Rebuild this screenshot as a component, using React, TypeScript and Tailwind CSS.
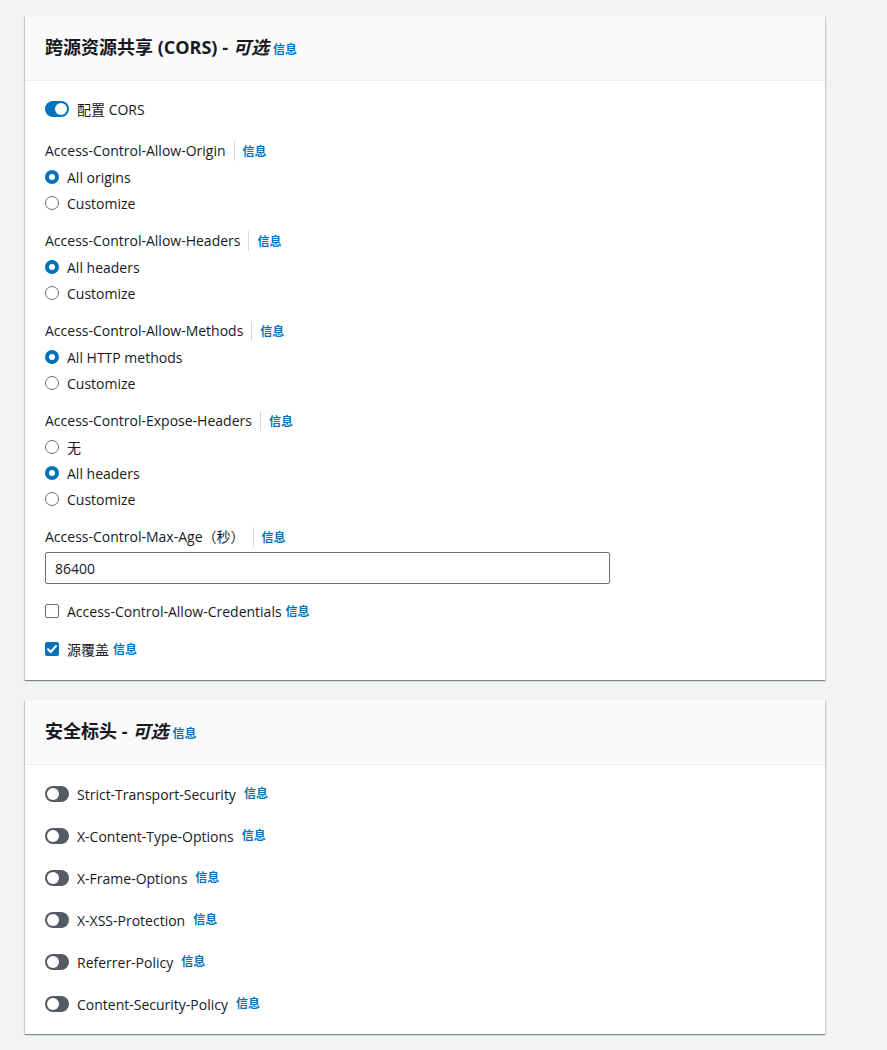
import React from "react";

const font = { fontFamily: '"Open Sans", "Noto Sans CJK SC", sans-serif' };

function Info() {
  return <a className="text-[12px] font-bold text-[#0073bb] leading-5 cursor-pointer">信息</a>;
}

function Toggle({ on }: { on?: boolean }) {
  return (
    <span
      className={`flex h-4 w-6 shrink-0 items-center rounded-full px-[2px] ${
        on ? "justify-end bg-[#0073bb]" : "justify-start bg-[#545b64]"
      }`}
    >
      <span className="h-3 w-3 rounded-full bg-white" />
    </span>
  );
}

function Radio({ checked, label }: { checked?: boolean; label: string }) {
  return (
    <label className="flex h-5 items-center gap-2">
      <span
        className={`h-[14px] w-[14px] rounded-full ${
          checked ? "border-[4px] border-[#0073bb] bg-white" : "border-[1.5px] border-[#687078] bg-white"
        }`}
      />
      <span>{label}</span>
    </label>
  );
}

function Checkbox({ checked }: { checked?: boolean }) {
  return checked ? (
    <span className="flex h-[14px] w-[14px] items-center justify-center rounded-[2px] bg-[#0073bb]">
      <svg viewBox="0 0 14 14" className="h-[14px] w-[14px]">
        <path d="M3 7.2 L5.8 10 L11 4" fill="none" stroke="white" strokeWidth="2" strokeLinecap="round" strokeLinejoin="round" />
      </svg>
    </span>
  ) : (
    <span className="h-[14px] w-[14px] rounded-[2px] border-[1.5px] border-[#687078] bg-white" />
  );
}

function FieldLabel({ children }: { children: React.ReactNode }) {
  return (
    <div className="flex h-5 items-center">
      <span className="border-r border-[#d5dbdb] pr-2 leading-5">{children}</span>
      <span className="pl-2">
        <Info />
      </span>
    </div>
  );
}

function RadioGroup({ label, options, selected }: { label: string; options: string[]; selected: number }) {
  return (
    <div className="flex flex-col gap-[6px]">
      <FieldLabel>{label}</FieldLabel>
      {options.map((o, i) => (
        <Radio key={o} label={o} checked={i === selected} />
      ))}
    </div>
  );
}

function Card({ title, children }: { title: string; children: React.ReactNode }) {
  return (
    <section className="w-[800px] bg-white shadow-[0_1px_1px_0_rgba(0,28,36,0.3),1px_1px_1px_0_rgba(0,28,36,0.15),-1px_1px_1px_0_rgba(0,28,36,0.15)]">
      <header className="border-b border-[#eaeded] bg-[#fafafa] px-5 pt-[18px] pb-[20px]">
        <h2 className="flex items-baseline text-[18px] font-bold leading-[26px]">
          <span>{title} - </span>
          <i className="ml-[5px]">可选</i>
          <span className="ml-[4px]">
            <Info />
          </span>
        </h2>
      </header>
      {children}
    </section>
  );
}

const headers = [
  "Strict-Transport-Security",
  "X-Content-Type-Options",
  "X-Frame-Options",
  "X-XSS-Protection",
  "Referrer-Policy",
  "Content-Security-Policy",
];

export default function App() {
  return (
    <div className="min-h-[1050px] bg-[#f2f3f3] pl-[25px] pt-4 text-[14px] text-[#16191f]" style={font}>
      <div className="flex flex-col gap-5">
        <Card title="跨源资源共享 (CORS)">
          <div className="flex flex-col px-5 pt-[18px] pb-[21px]">
            <div className="flex h-5 items-center gap-2">
              <Toggle on />
              <span>配置 CORS</span>
            </div>
            <div className="mt-[22px] flex flex-col gap-[18px]">
              <RadioGroup label="Access-Control-Allow-Origin" options={["All origins", "Customize"]} selected={0} />
              <RadioGroup label="Access-Control-Allow-Headers" options={["All headers", "Customize"]} selected={0} />
              <RadioGroup label="Access-Control-Allow-Methods" options={["All HTTP methods", "Customize"]} selected={0} />
              <RadioGroup label="Access-Control-Expose-Headers" options={["无", "All headers", "Customize"]} selected={1} />
              <div className="flex flex-col gap-[5px]">
                <FieldLabel>Access-Control-Max-Age（秒）</FieldLabel>
                <input
                  readOnly
                  value="86400"
                  className="h-8 w-[565px] rounded-[2px] border border-[#687078] px-[9px] text-[14px] text-[#16191f] outline-none"
                  style={font}
                />
              </div>
              <label className="mt-[-1px] flex h-5 items-center gap-2">
                <Checkbox />
                <span>Access-Control-Allow-Credentials</span>
                <span className="-ml-1"><Info /></span>
              </label>
              <label className="flex h-5 items-center gap-2">
                <Checkbox checked />
                <span>源覆盖</span>
                <span className="-ml-1"><Info /></span>
              </label>
            </div>
          </div>
        </Card>
        <Card title="安全标头">
          <div className="flex flex-col gap-[22px] px-5 pt-[19px] pb-5">
            {headers.map((h) => (
              <div key={h} className="flex h-5 items-center gap-2">
                <Toggle />
                <span>{h}</span>
                <Info />
              </div>
            ))}
          </div>
        </Card>
      </div>
    </div>
  );
}
